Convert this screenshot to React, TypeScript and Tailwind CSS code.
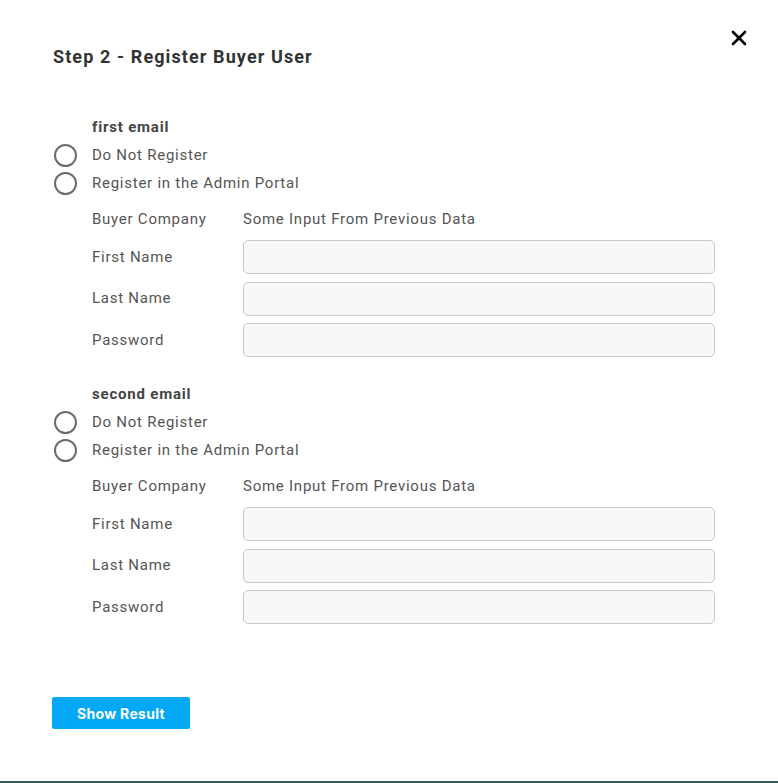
import { X } from 'lucide-react';

type Section = { title: string };

const sections: Section[] = [{ title: 'first email' }, { title: 'second email' }];

function Radio({ label }: { label: string }) {
  return (
    <label className="flex items-center h-[28px] gap-[15px] cursor-pointer">
      <span className="w-[23px] h-[23px] rounded-full border-2 border-[#6b6b6b] bg-white" />
      <span className="text-[15px] tracking-[0.75px] text-[#555]">{label}</span>
    </label>
  );
}

function EmailSection({ title }: Section) {
  return (
    <div className="flex flex-col">
      <div className="pl-[92px] h-[20px] flex items-center text-[15px] tracking-[0.8px] font-bold text-[#444]">
        {title}
      </div>
      <div className="mt-1 pl-[54px] flex flex-col">
        <Radio label="Do Not Register" />
        <Radio label="Register in the Admin Portal" />
      </div>
      <div className="mt-[10.5px] pl-[92px] flex flex-col gap-[7.5px] text-[15px] tracking-[0.75px] text-[#555]">
        <div className="flex items-center h-[24px] mb-px">
          <span className="w-[151px]">Buyer Company</span>
          <span>Some Input From Previous Data</span>
        </div>
        {['First Name', 'Last Name', 'Password'].map((f) => (
          <div key={f} className="flex items-center">
            <span className="w-[151px]">{f}</span>
            <input
              type={f === 'Password' ? 'password' : 'text'}
              className="w-[472px] h-[34px] rounded-[5px] border border-[#c8c8c8] bg-[#f8f8f8] px-2 outline-none"
            />
          </div>
        ))}
      </div>
    </div>
  );
}

export default function App() {
  return (
    <div className="relative h-[783px] w-full bg-white flex flex-col font-['Roboto',sans-serif]">
      <button className="absolute top-[26px] left-[727px] text-black">
        <X size={24} strokeWidth={2.6} />
      </button>

      <h2 className="mt-[44px] ml-[53px] h-[24px] flex items-center text-[18px] tracking-[1.1px] font-bold text-[#333]">
        Step 2 - Register Buyer User
      </h2>

      <div className="mt-[49px]">
        <EmailSection {...sections[0]} />
      </div>
      <div className="mt-[27px]">
        <EmailSection {...sections[1]} />
      </div>

      <button className="mt-[73px] ml-[52px] w-[138px] h-[32px] rounded-[2px] bg-[#03a9f4] text-white text-[14px] tracking-[0.3px] font-bold font-['Inter',sans-serif]">
        Show Result
      </button>

      <div className="mt-auto h-[2px] bg-[#2e5b58]" />
    </div>
  );
}
